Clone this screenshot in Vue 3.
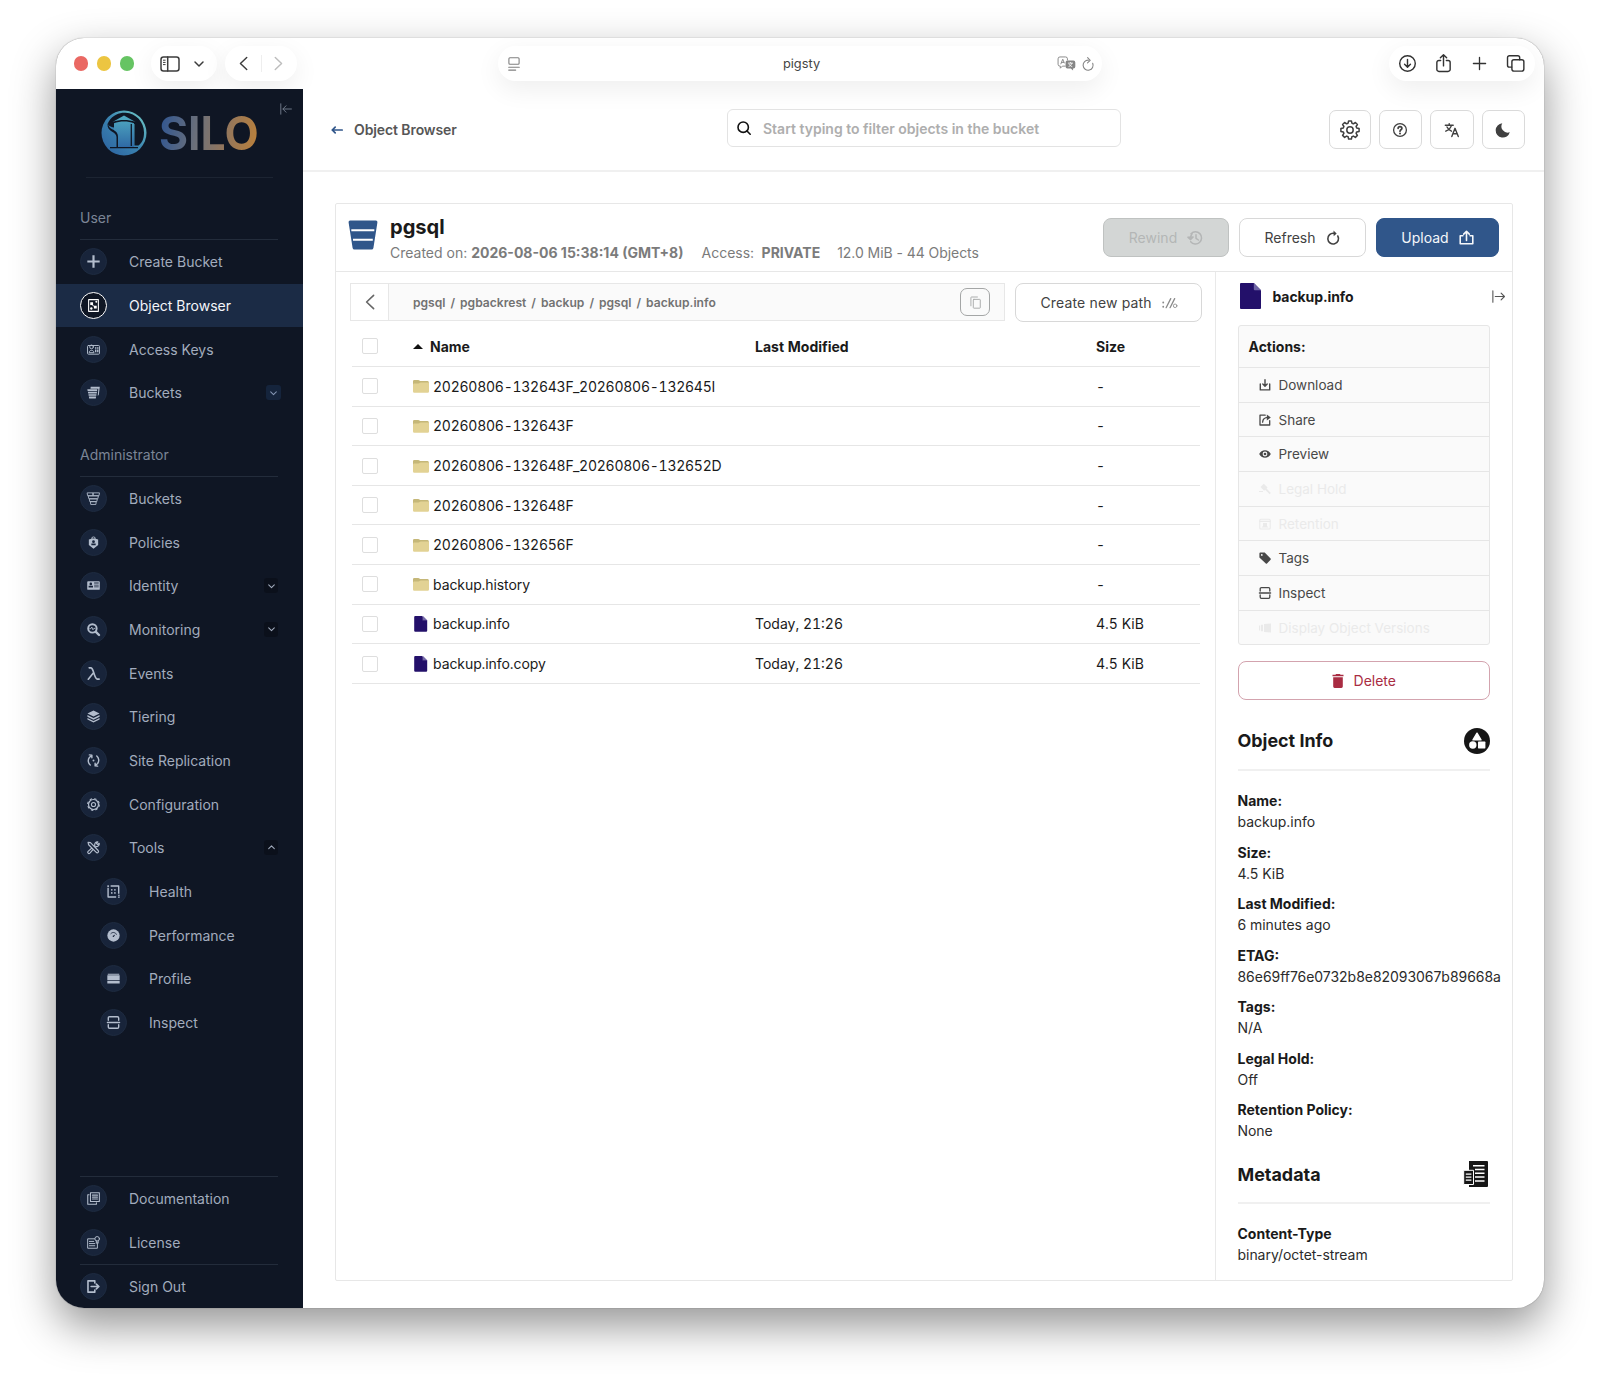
<template>
  <div class="desktop">
    <div class="window">
      <header class="toolbar">
        <div class="lights">
          <span class="light red"></span>
          <span class="light yellow"></span>
          <span class="light green"></span>
        </div>
        <div class="pill pill-side">
          <svg class="ic-sidebar" viewBox="0 0 20 16" v-html="icons.sidebar"></svg>
          <svg class="ic-chev" viewBox="0 0 10 6" v-html="icons.chevDown"></svg>
        </div>
        <div class="pill pill-nav">
          <svg class="ic-nav" viewBox="0 0 10 16" v-html="icons.left"></svg>
          <span class="nav-sep"></span>
          <svg class="ic-nav muted" viewBox="0 0 10 16" v-html="icons.right"></svg>
        </div>
        <div class="pill pill-url">
          <svg class="ic-reader" viewBox="0 0 12 14" v-html="icons.reader"></svg>
          <span class="url">pigsty</span>
          <span class="url-tools">
            <svg class="ic-translate" viewBox="0 0 20 16" v-html="icons.translate"></svg>
            <svg class="ic-reload" viewBox="0 0 12 16" v-html="icons.reload"></svg>
          </span>
        </div>
        <div class="pill pill-actions">
          <svg viewBox="0 0 20 20" v-html="icons.downloads"></svg>
          <svg viewBox="0 0 20 20" v-html="icons.share"></svg>
          <svg viewBox="0 0 20 20" v-html="icons.newTab"></svg>
          <svg viewBox="0 0 20 20" v-html="icons.tabs"></svg>
        </div>
      </header>

      <div class="app">
        <aside class="sidebar">
          <div class="brand">
            <svg class="brand-mark" viewBox="0 0 46 46" v-html="icons.logo"></svg>
            <span class="brand-name">SILO</span>
            <svg class="collapse" viewBox="0 0 12 12" v-html="icons.collapse"></svg>
          </div>

          <template v-for="section in menu" :key="section.title">
            <div class="section-title"><span>{{ section.title }}</span></div>
            <a
              v-for="item in section.items"
              :key="item.label"
              class="item"
              :class="{ active: item.active, child: item.child }"
            >
              <span class="bubble"><svg viewBox="0 0 12 12" v-html="icons[item.icon]"></svg></span>
              <span class="label">{{ item.label }}</span>
              <span v-if="item.toggle" class="toggle" :class="{ tinted: item.tinted }">
                <svg viewBox="0 0 10 6" v-html="icons[item.toggle]"></svg>
              </span>
            </a>
          </template>

          <div class="bottom">
            <a v-for="item in footer" :key="item.label" class="item" :class="{ ruled: item.ruled }">
              <span class="bubble"><svg viewBox="0 0 12 12" v-html="icons[item.icon]"></svg></span>
              <span class="label">{{ item.label }}</span>
            </a>
          </div>
        </aside>

        <main class="main">
          <div class="topbar">
            <div class="crumb">
              <svg viewBox="0 0 12 8" v-html="icons.back"></svg>
              <span>Object Browser</span>
            </div>
            <div class="search">
              <svg viewBox="0 0 14 14" v-html="icons.search"></svg>
              <span>Start typing to filter objects in the bucket</span>
            </div>
            <div class="tools">
              <button v-for="t in tools" :key="t" class="tool" :class="t">
                <svg viewBox="0 0 20 20" v-html="icons[t]"></svg>
              </button>
            </div>
          </div>

          <section class="panel">
            <div class="bucket">
              <svg class="bucket-icon" viewBox="0 0 30 30" v-html="icons.bucket"></svg>
              <div class="bucket-text">
                <h1>pgsql</h1>
                <p>
                  <span>Created on: <b>2026-08-06 15:38:14 (GMT+8)</b></span>
                  <span class="access">Access: <b>PRIVATE</b></span>
                  <span class="usage">12.0 MiB - 44 Objects</span>
                </p>
              </div>
              <div class="bucket-actions">
                <button class="btn disabled">Rewind <svg viewBox="0 0 16 16" v-html="icons.rewind"></svg></button>
                <button class="btn">Refresh <svg viewBox="0 0 16 16" v-html="icons.refresh"></svg></button>
                <button class="btn primary">Upload <svg viewBox="0 0 16 16" v-html="icons.upload"></svg></button>
              </div>
            </div>

            <div class="body">
              <div class="listing">
                <div class="path-row">
                  <div class="path">
                    <button class="path-back"><svg viewBox="0 0 10 16" v-html="icons.left"></svg></button>
                    <span class="path-text">
                      <template v-for="(part, i) in path" :key="i">
                        <i v-if="i">/</i><span>{{ part }}</span>
                      </template>
                    </span>
                    <button class="copy"><svg viewBox="0 0 12 14" v-html="icons.copy"></svg></button>
                  </div>
                  <button class="btn new-path">Create new path <svg viewBox="0 0 16 12" v-html="icons.newPath"></svg></button>
                </div>

                <div class="row head">
                  <span class="check"></span>
                  <span class="name"><i class="sort"></i>Name</span>
                  <span class="modified">Last Modified</span>
                  <span class="size">Size</span>
                </div>
                <div v-for="f in files" :key="f.name" class="row">
                  <span class="check"></span>
                  <span class="name" :class="{ dated: /^\d/.test(f.name) }">
                    <svg viewBox="0 0 16 16" v-html="icons[f.type]"></svg>{{ f.name }}
                  </span>
                  <span class="modified">{{ f.modified }}</span>
                  <span class="size">{{ f.size }}</span>
                </div>
              </div>

              <aside class="details">
                <div class="details-head">
                  <svg class="file-big" viewBox="0 0 21 26" v-html="icons.fileBig"></svg>
                  <b>backup.info</b>
                  <svg class="expand" viewBox="0 0 12 12" v-html="icons.expand"></svg>
                </div>

                <div class="actions">
                  <div class="actions-title">Actions:</div>
                  <div v-for="a in actions" :key="a.label" class="action" :class="{ off: a.off }">
                    <svg viewBox="0 0 12 12" v-html="icons[a.icon]"></svg>{{ a.label }}
                  </div>
                </div>

                <button class="btn delete"><svg viewBox="0 0 12 14" v-html="icons.trash"></svg> Delete</button>

                <div class="heading">
                  <h2>Object Info</h2>
                  <svg viewBox="0 0 26 26" v-html="icons.objectInfo"></svg>
                </div>
                <dl>
                  <div v-for="i in info" :key="i.label">
                    <dt>{{ i.label }}</dt>
                    <dd>{{ i.value }}</dd>
                  </div>
                </dl>

                <div class="heading meta">
                  <h2>Metadata</h2>
                  <svg viewBox="0 0 26 26" v-html="icons.metadata"></svg>
                </div>
                <dl>
                  <div>
                    <dt>Content-Type</dt>
                    <dd>binary/octet-stream</dd>
                  </div>
                </dl>
              </aside>
            </div>
          </section>
        </main>
      </div>
    </div>
  </div>
</template>

<script setup>
const menu = [
  {
    title: 'User',
    items: [
      { label: 'Create Bucket', icon: 'plus' },
      { label: 'Object Browser', icon: 'browser', active: true },
      { label: 'Access Keys', icon: 'keys' },
      { label: 'Buckets', icon: 'bucketsSolid', toggle: 'chevDown', tinted: true },
    ],
  },
  {
    title: 'Administrator',
    items: [
      { label: 'Buckets', icon: 'bucketsLine' },
      { label: 'Policies', icon: 'policies' },
      { label: 'Identity', icon: 'identity', toggle: 'chevDown' },
      { label: 'Monitoring', icon: 'monitoring', toggle: 'chevDown' },
      { label: 'Events', icon: 'lambda' },
      { label: 'Tiering', icon: 'tiering' },
      { label: 'Site Replication', icon: 'replication' },
      { label: 'Configuration', icon: 'config' },
      { label: 'Tools', icon: 'wrench', toggle: 'chevUp' },
      { label: 'Health', icon: 'health', child: true },
      { label: 'Performance', icon: 'performance', child: true },
      { label: 'Profile', icon: 'profile', child: true },
      { label: 'Inspect', icon: 'inspect', child: true },
    ],
  },
];

const footer = [
  { label: 'Documentation', icon: 'docs', ruled: true },
  { label: 'License', icon: 'license' },
  { label: 'Sign Out', icon: 'signOut', ruled: true },
];

const tools = ['gear', 'help', 'language', 'moon'];

const path = ['pgsql', 'pgbackrest', 'backup', 'pgsql', 'backup.info'];

const files = [
  { name: '20260806-132643F_20260806-132645I', type: 'folder', modified: '', size: '-' },
  { name: '20260806-132643F', type: 'folder', modified: '', size: '-' },
  { name: '20260806-132648F_20260806-132652D', type: 'folder', modified: '', size: '-' },
  { name: '20260806-132648F', type: 'folder', modified: '', size: '-' },
  { name: '20260806-132656F', type: 'folder', modified: '', size: '-' },
  { name: 'backup.history', type: 'folder', modified: '', size: '-' },
  { name: 'backup.info', type: 'file', modified: 'Today, 21:26', size: '4.5 KiB' },
  { name: 'backup.info.copy', type: 'file', modified: 'Today, 21:26', size: '4.5 KiB' },
];

const actions = [
  { label: 'Download', icon: 'download' },
  { label: 'Share', icon: 'shareBox' },
  { label: 'Preview', icon: 'eye' },
  { label: 'Legal Hold', icon: 'gavel', off: true },
  { label: 'Retention', icon: 'retention', off: true },
  { label: 'Tags', icon: 'tag' },
  { label: 'Inspect', icon: 'inspect' },
  { label: 'Display Object Versions', icon: 'versions', off: true },
];

const info = [
  { label: 'Name:', value: 'backup.info' },
  { label: 'Size:', value: '4.5 KiB' },
  { label: 'Last Modified:', value: '6 minutes ago' },
  { label: 'ETAG:', value: '86e69ff76e0732b8e82093067b89668a' },
  { label: 'Tags:', value: 'N/A' },
  { label: 'Legal Hold:', value: 'Off' },
  { label: 'Retention Policy:', value: 'None' },
];

// wraps markup in a stroked group that inherits the text colour
const line = (w, inner) =>
  `<g fill="none" stroke="currentColor" stroke-width="${w}" stroke-linecap="round" stroke-linejoin="round">${inner}</g>`;
const solid = (inner) => `<g fill="currentColor">${inner}</g>`;

const icons = {
  // browser chrome
  sidebar: line(1.5, '<rect x="1" y="1" width="18" height="14" rx="2.5"/><path d="M7.7 1v14"/><path d="M3.4 4.2h1.8M3.4 6.4h1.8M3.4 8.6h1.8" stroke-width="1"/>'),
  chevDown: line(1.5, '<path d="M1 1l4 4 4-4"/>'),
  chevUp: line(1.5, '<path d="M1 5l4-4 4 4"/>'),
  left: line(1.6, '<path d="M8.6 1.4L1.6 8l7 6.6"/>'),
  right: line(1.6, '<path d="M1.4 1.4l7 6.6-7 6.6"/>'),
  reader: line(1.1, '<rect x=".9" y=".8" width="10.2" height="6.4" rx="1"/><path d="M.7 10.2h10.6M.7 13.1h7"/>'),
  translate: line(1, '<path d="M8.5 10.8H5.6L3.4 13v-2.2H3a2 2 0 0 1-2-2V3a2 2 0 0 1 2-2h6a2 2 0 0 1 2 2v1.2"/><path d="M4 8.4l2-5 1.6 4M4.7 6.8h2.4"/>')
    + '<path fill="currentColor" d="M11 4.8h6.4a2 2 0 0 1 2 2v4.4a2 2 0 0 1-2 2h-.4v2.3l-2.4-2.3H11a2 2 0 0 1-2-2V6.8a2 2 0 0 1 2-2z"/><path d="M11.5 7.6h5.4M14.2 6.5v1.1M12.2 11.3c2-.8 3-2 3.5-3.7M12.7 8.6c.7 1.3 1.7 2.2 3.4 2.7" fill="none" stroke="#fff" stroke-width=".9"/>',
  reload: line(1.1, '<path d="M10.7 7.2A5 5 0 1 1 6.6 4.2"/><path d="M5.6 1.6l2.6 2.8-2.7 2.4"/>'),
  downloads: line(1.5, '<circle cx="10" cy="10" r="8.2"/><path d="M10 5.8v8M6.9 10.9l3.1 3.1 3.1-3.1"/>'),
  share: line(1.5, '<path d="M7 6.8H5.2A2.2 2.2 0 0 0 3 9v7.2a2.2 2.2 0 0 0 2.2 2.2h9.6a2.2 2.2 0 0 0 2.2-2.2V9a2.2 2.2 0 0 0-2.2-2.2H13"/><path d="M10 12.5V1M6.7 4L10 .8 13.3 4"/>'),
  newTab: line(1.4, '<path d="M10 3.6v12.8M3.6 10h12.8"/>'),
  tabs: line(1.5, '<rect x="6.2" y="6" width="12.6" height="12" rx="2.2"/><path d="M6 13.8H3.6a2 2 0 0 1-2-2V3.9a2 2 0 0 1 2-2h8.8a2 2 0 0 1 2 2V6"/>'),

  // sidebar
  logo: `<defs><linearGradient id="mark" x1="0" y1="1" x2="1" y2="0"><stop offset="0" stop-color="#2b5f9e"/><stop offset=".5" stop-color="#3a83b0"/><stop offset="1" stop-color="#74cfc9"/></linearGradient>
    <linearGradient id="tower" x1="0" y1="1" x2="0" y2="0"><stop offset="0" stop-color="#2f6aa5"/><stop offset="1" stop-color="#4a9fbd"/></linearGradient></defs>
    <circle cx="23" cy="23" r="22.5" fill="url(#mark)"/>
    <path d="M7.5 12C12 4.5 19 2.5 24.5 2.8 35 3.3 43 12 43 22.5c0 6.5-2 10.500-5.500 13H33.500V14H13v3.500c-4-.6-7.200-2.200-5.500-5.500z" fill="#0f1624"/>
    <path d="M7.5 12c-1 6 3 6.500 6 8.500 2.500 1.700 3.500 3.500 3.500 6.500v10h-1.500V27c0-5.500-9.500-5-9-13z" fill="#0f1624"/>
    <path d="M23 5.500L11.500 12c3.500-1.300 7.500-1.900 11.500-1.900s8 .6 11.500 1.900z" fill="#4ea6c0"/>
    <path d="M13 13.300c6-2.300 14-2.300 20 0V37H17.500V27c0-4-2-5.500-4.500-7z" fill="url(#tower)"/>
    <path d="M9 37.600h28M30.300 14v22" stroke="#0f1624" stroke-width="1.300" fill="none"/>`,
  collapse: line(1, '<path d="M.8.8v10.4M11.4 6H3M6 2.8L2.9 6 6 9.2"/>'),
  expand: line(1, '<path d="M.8.8v10.4M3 6h8.4M8.4 2.8L11.5 6 8.4 9.2"/>'),
  plus: solid('<path d="M5 .3h2V5h4.7v2H7v4.7H5V7H.3V5H5z"/>'),
  browser: line(1, '<path d="M1.5.6h9v10.8h-9z"/>') + solid('<rect x="3" y="3" width="2.6" height="2.6"/><rect x="6.4" y="6.2" width="2.6" height="2.6"/><circle cx="4" cy="8.8" r="1.1"/><circle cx="8.6" cy="2.6" r=".9"/><path d="M5 5l2 1.6-.5.5-2-1.6z"/>'),
  keys: line(.9, '<rect x=".5" y="2.3" width="11" height="8" rx=".8"/><circle cx="4.2" cy="3.6" r="1.7"/><path d="M2 8.6c0-2.6 4.4-2.6 4.4 0z"/>') + solid('<path d="M7.4 4h1.3v1.3H7.4zM9.3 4h1.3v1.3H9.3zM7.4 6h1.3v2.6H7.4zM9.3 6h1.3v2.6H9.3z"/>'),
  bucketsSolid: solid('<path d="M3.4.6h8.4l-.9 7.8-1 .6.6-6.4H3.2zM.3 3h9.2l-.2 1.7H.6zM.8 5.4h8.4L9 7H1.1zM1.3 7.7h7.5l-.2 1.4H1.5zM1.7 9.8h6.7l-.3 1.8H2z"/>'),
  bucketsLine: line(.8, '<path d="M.5.8h5v2.6H.9zM6 .8h5.5l-.4 2.6H6zM1.5 3.6h9l-.5 2.6H2zM2.5 6.4h7l-.4 2.4H2.9zM3.5 9h5l-.3 2.5H3.8z"/>'),
  policies: '<path fill="currentColor" fill-rule="evenodd" d="M4 2.5a2 2 0 0 1 4 0l2.3.7v5L6 11.8 1.7 8.2v-5zM4.9 2.3h2.2a1.1 1.1 0 0 0-2.2 0zM6 3.9a1.3 1.3 0 1 0 0 2.6 1.3 1.3 0 0 0 0-2.6zM4 7v1.5h4V7z"/>',
  identity: '<path fill="currentColor" fill-rule="evenodd" d="M1 2h10q.8 0 .8.8v6.4q0 .8-.8.8H1q-.8 0-.8-.8V2.8Q.2 2 1 2zm2.5 1.3a1.2 1.2 0 1 0 0 2.4 1.2 1.2 0 0 0 0-2.4zM1.5 6.3v1.5h4V6.3zM6.6 3.2v1h4.2v-1zM6.6 5.2v.7h4.2v-.7zM6.6 7v.7h4.2V7z"/>',
  monitoring: line(1.8, '<circle cx="5" cy="5" r="3.9"/><path d="M8.2 8.2l2.9 2.9" stroke-width="2.2"/>') + line(.8, '<path d="M2.6 5.2h1l.8-1.5 1.1 2.6.8-1.3h1"/>'),
  lambda: line(1.5, '<path d="M2 .8h1.6C5 .8 5.4 3 6.2 5.2 7.2 8 8 11 9.5 11.2h1.7M6 5.2L1.2 11.3"/>'),
  tiering: solid('<path d="M6 .5l5.6 2.7L6 6 .4 3.2z"/><path d="M.4 4.6L6 7.3l5.6-2.7v1.6L6 8.9.4 6.2z"/><path d="M.4 7.4L6 10.1l5.6-2.7v1.4L6 11.6.4 8.8z"/>'),
  replication: line(1.3, '<path d="M4.5 1.2L2.2 3.2a5 5 0 0 0 .8 6.9M2.2.8l2.3.2v2.4M7.5 10.8l2.3-2a5 5 0 0 0-.8-6.9M9.8 11.2l-2.3-.2V8.6"/>') + solid('<circle cx="6" cy="6" r=".9"/>'),
  config: line(1, '<circle cx="6" cy="6" r="1.9"/>') + '<circle cx="6" cy="6" r="4.6" fill="none" stroke="currentColor" stroke-width="1.1"/><circle cx="6" cy="6" r="5.4" fill="none" stroke="currentColor" stroke-width="1" stroke-dasharray="2.2 2.04"/>',
  wrench: line(1.1, '<path d="M1 1.2l2.2.3 6.9 7c1.5 1.5-.3 3.3-1.8 1.8L1.5 3.5zM7.2 4.3c-.5-2 .8-3.7 2.8-3.5L8.8 2.3l1 1 1.5-1.2c.3 2-1.3 3.4-3.3 3M4.3 6.7L1 9.6c-1 1.2.5 2.6 1.7 1.6L5.5 8"/>'),
  health: line(1.3, '<path d="M4 .9h6.8v6.6M1 3.3v7.8h6.8" stroke-linecap="square"/>') + solid('<rect x=".3" y=".3" width="1.5" height="1.5"/><rect x="10.2" y="9" width="1.5" height="1"/><rect x="10.2" y="10.6" width="1.5" height="1.2"/><circle cx="4.4" cy="4.4" r=".8"/><circle cx="7.3" cy="4.4" r=".8"/><circle cx="4.4" cy="7.3" r=".8"/><circle cx="7.3" cy="7.3" r=".8"/>'),
  performance: solid('<circle cx="6" cy="6" r="5.7"/>') + '<path d="M3.3 4.5a3.2 3.2 0 0 1 5.6.8" fill="none" stroke="#18243a" stroke-width=".7"/><path d="M5.4 6.2l2.3-1.2-1.3 2.2a.7.7 0 0 1-1-1z" fill="#18243a"/>',
  profile: solid('<path d="M.7 1.5h10.6v1H.7zM.3 3h11.4v4.6H.3zM.3 8.4h11.4v2.2H.3z"/>'),
  inspect: line(1.3, '<path d="M1.2 4V1.9Q1.2.7 2.4.7h7.2q1.2 0 1.2 1.2V4M.4 6h11.2M1.2 8v2.1q0 1.2 1.2 1.2h7.2q1.2 0 1.2-1.2V8"/>'),
  docs: line(1, '<path d="M3.2.7h8.2v8H3.2z"/><path d="M1.9 2.6H.7v8.7h8V10M5 2.9h4.7M5 4.7h4.7M5 6.5h4.7"/>'),
  license: line(.9, '<path d="M7 2.6H.6v8.7h9V6.5M2.2 5h4M2.2 7h5M2.2 9h5"/><circle cx="9.4" cy="2.6" r="2.1"/><path d="M8.6 4.5v2.2l.9-.6.8.6V4.5"/>'),
  signOut: line(1.5, '<path d="M7.2 2.8V.8H.9v10.4h6.3v-2M3.8 6h6M8.6 3.8L11 6 8.6 8.2"/>'),

  // top bar
  back: line(1.7, '<path d="M11.2 4H1.3M4.2 1.1L1.2 4l3 2.9"/>'),
  search: line(1.6, '<circle cx="6.2" cy="6.2" r="5.2"/><path d="M10 10l3.2 3.2"/>'),
  gear: line(1.5, '<circle cx="10" cy="10" r="3.2"/><path d="M8.6.9h2.8l.5 2.3 1.5.6 2-1.3 2 2-1.3 2 .6 1.5 2.4.6v2.8l-2.4.5-.6 1.5 1.3 2-2 2-2-1.3-1.5.6-.5 2.4H8.6l-.5-2.4-1.5-.6-2 1.3-2-2 1.3-2-.6-1.5-2.4-.5V8.6L3.3 8l.6-1.5-1.3-2 2-2 2 1.3 1.5-.6z"/>'),
  help: line(1.3, '<circle cx="10" cy="10" r="6.4"/>') + line(1.7, '<path d="M8.1 8.4c.1-2.5 3.8-2.4 3.8 0 0 1.4-1.9 1.3-1.9 2.8"/>') + solid('<circle cx="10" cy="13.6" r="1"/>'),
  language: line(1.4, '<path d="M3.3 5.2h7.9M7.2 3.6v1.6M9.5 5.2c-.6 2.5-2.6 4.700-5.700 6M5 7c1 2 2.500 3.300 4.500 4.200"/><path d="M9.800 16.600l3.200-8.300 3.300 8.300M10.900 13.800h4.200"/>'),
  moon: solid('<path d="M9.3 3.2A7.2 7.2 0 1 0 16.8 12.3A6.3 6.3 0 0 1 9.3 3.2z"/>'),

  // bucket header and list
  bucket: '<path fill="#30568a" d="M2.2.5h25.6q1.9 0 1.6 1.9l-4 25.6q-.3 1.5-1.8 1.5H6.4q-1.5 0-1.8-1.5L.6 2.4Q.3.5 2.2.5z"/><path d="M3.3 10.3h23M5 19.8h19.8" stroke="#fff" stroke-width="2.1"/>',
  rewind: line(1.5, '<path d="M4 3.7a6.1 6.1 0 1 1-.3 8"/><path d="M.9 7.2l2.7 2.4 2.5-2.6z" fill="currentColor"/><path d="M3.6 8.5c0-2 .4-3.4 1.4-4.8M9 4.8V8.3l2.4 1.7"/>'),
  refresh: line(1.7, '<path d="M12.6 6.4A5.7 5.7 0 1 1 8.6 3.6"/><path d="M8 .6l3.4 3-3.2 3z" fill="currentColor" stroke="none"/>'),
  upload: line(1.7, '<path d="M4.2 6.2H1.3v8.4h13.4V6.2h-2.9M8 11.2V2M5 4.4l3-3 3 3"/>'),
  copy: line(1, '<rect x="3.6" y="3.6" width="7.6" height="9.6" rx=".6"/><path d="M1 10.6V1.6Q1 1 1.6 1h6.5"/>'),
  newPath: solid('<circle cx="1.3" cy="5.5" r="1"/><circle cx="1.3" cy="10" r="1"/>') + line(1.4, '<path d="M4.4 11L9.3 1.3M8.6 11L13.5 1.3"/>') + line(.9, '<circle cx="14" cy="9" r="1.9"/>'),
  folder: '<path fill="#c5b778" d="M0 3.2Q0 1.9 1.3 1.9h3.9q.9 0 1.4.7l.3.4h7.6q1.1 0 1.3 1.3v3H0z"/><path fill="#e2d294" d="M0 6.7q0-1.2 1.2-1.2h4.3q.7 0 1.1-.4l.3-.3q.5-.4 1.2-.4h6.6q1.3 0 1.3 1.3v7.7q0 1.3-1.3 1.3H1.3Q0 14.7 0 13.4z"/>',
  file: '<path fill="#23106a" d="M2.3 0h6.9v4.3h5v10.4q0 1.1-1.1 1.1H2.3q-1.1 0-1.1-1.1V1.1Q1.2 0 2.3 0z"/><path fill="#23106a" d="M9.2 0l5 4.8H9.2z"/><path fill="#7469a8" d="M10 0l4.2 4.3H10z"/>',
  fileBig: '<path fill="#23106a" d="M1 0h12.8L21 7.2V25q0 1-1 1H1q-1 0-1-1V1q0-1 1-1z"/><path fill="#6f66a6" d="M13.8 0L21 7.2h-6.2q-1 0-1-1z"/>',

  // object actions
  download: line(1.4, '<path d="M1.3 5v5.9h9.4V5M6 .8v6M3.8 5L6 7.2 8.2 5"/>'),
  shareBox: line(1.3, '<path d="M6.2 1.2H1v9.8h9.7V6.6M3.6 8.2c.2-3 2-4.7 5.4-4.8"/>') + solid('<path d="M7.8.6l4 2.9-4 2.9z"/>'),
  eye: '<path fill="currentColor" fill-rule="evenodd" d="M6 2.3c2.6 0 4.7 1.5 5.8 3.7C10.7 8.2 8.6 9.7 6 9.7S1.3 8.2.2 6C1.3 3.8 3.4 2.3 6 2.3zm0 1.3a2.4 2.4 0 1 0 0 4.8 2.4 2.4 0 0 0 0-4.8z"/><circle cx="6" cy="6" r="1.3" fill="currentColor"/>',
  gavel: solid('<path d="M4.8.8l3.8 3.6-1 1 4.2 4.6-1.2 1.2L6.2 6.7l-1.1 1L1.5 4zM0 8h4v1H0z"/>'),
  retention: line(1.1, '<rect x=".8" y="1.2" width="10.4" height="9.8" rx="1"/><path d="M.8 3.4h10.4"/>') + solid('<path d="M4 5h4v3l1.5 1.5h-7L4 8z"/>'),
  tag: '<path fill="currentColor" fill-rule="evenodd" d="M.4 1.6Q.4.6 1.4.6h4.3l5.9 6q.5.6 0 1.2L8 11.4q-.6.5-1.2 0L.4 5.4zM2.8 2a.9.9 0 1 0 0 1.8.9.9 0 0 0 0-1.8z"/>',
  versions: solid('<path d="M0 3.5h1.2v5H0zM2 2.8h2v6.4H2zM5 2l7-.5v9L5 10z"/>'),
  trash: solid('<path d="M4 0h4l.5.8h3v1.5H.5V.8h3zM1.2 3.2h9.6v9.4q0 1.4-1.4 1.4H2.6q-1.4 0-1.4-1.4z"/>'),
  objectInfo: '<circle cx="13" cy="13" r="13" fill="#161616"/><path d="M13 5.2l4 6.700H9z" fill="#fff" stroke="#fff" stroke-width="1.400" stroke-linejoin="round"/><circle cx="8.8" cy="17" r="3.7" fill="#fff"/><rect x="14" y="13.600" width="7.400" height="6.800" rx=".6" fill="#fff"/>',
  metadata: '<path fill="#161616" d="M5 0h18q1 0 1 1v24q0 1-1 1H5z"/><path d="M9 4.7h11.5M11 8.5h9.5M11 12.3h9.5M11 16.1h9.5M11 19.9h9.5" stroke="#fff" stroke-width="1.5"/><path fill="#161616" stroke="#fff" stroke-width="1" d="M-.3 9.3h9.8v14.2H-.3z"/><path d="M1.8 13.2h5.6M1.8 16.2h5.6M1.8 19.2h5.6" stroke="#fff" stroke-width="1.3"/>',
};
</script>

<style>
body {
  margin: 0;
  background: #fff;
}
</style>

<style scoped>
* {
  box-sizing: border-box;
}
svg {
  display: block;
  flex: none;
  overflow: visible;
}
button {
  font: inherit;
  letter-spacing: inherit;
  margin: 0;
  padding: 0;
  background: none;
  border: 0;
}
.desktop {
  height: 1382px;
  padding: 38px 56px 74px;
  background: #fff;
  font-family: Inter, sans-serif;
  font-size: 14px;
  color: #1a1a1a;
  overflow: hidden;
}
.window {
  display: flex;
  flex-direction: column;
  height: 1270px;
  border-radius: 28px;
  overflow: hidden;
  background: #fff;
  box-shadow: 0 0 1px rgba(0, 0, 0, 0.55), 0 18px 44px rgba(0, 0, 0, 0.42);
}

/* browser toolbar */
.toolbar {
  display: flex;
  align-items: center;
  height: 51px;
  padding: 0 9px 0 17.5px;
  flex: none;
  color: #3c3c3c;
}
.lights {
  display: flex;
  gap: 8.5px;
}
.light {
  width: 14.5px;
  height: 14.5px;
  border-radius: 50%;
}
.red { background: #ea6863; }
.yellow { background: #ecc541; }
.green { background: #66c463; }
.pill {
  display: flex;
  align-items: center;
  height: 35px;
  border-radius: 18px;
  background: #fff;
  box-shadow: 0 8px 26px rgba(0, 0, 0, 0.07);
}
.pill-side {
  width: 66px;
  margin-left: 17px;
  padding-left: 9px;
  gap: 14px;
}
.ic-sidebar { width: 20px; height: 16px; }
.ic-chev { width: 10px; height: 6px; }
.pill-nav {
  width: 72px;
  margin-left: 8px;
  padding: 0 14px;
  justify-content: space-between;
}
.ic-nav { width: 9px; height: 15px; }
.muted { color: #bdbdbd; }
.nav-sep {
  width: 1px;
  height: 17px;
  background: #eee;
}
.pill-url {
  width: 604px;
  margin-left: 201px;
  padding: 0 8px 0 10px;
  justify-content: space-between;
  font-size: 12.8px;
}
.ic-reader { width: 12px; height: 14px; color: #808080; }
.url { color: #444; padding-left: 26px; }
.url-tools {
  display: flex;
  align-items: center;
  gap: 6px;
  color: #858585;
}
.ic-translate { width: 19px; height: 15px; }
.ic-reload { width: 12px; height: 16px; }
.pill-actions {
  width: 146px;
  margin-left: auto;
  padding: 0 10px 0 9px;
  justify-content: space-between;
  color: #333;
}
.pill-actions svg { width: 19px; height: 19px; }

.app {
  display: flex;
  flex: 1;
  min-height: 0;
}

/* sidebar */
.sidebar {
  display: flex;
  flex-direction: column;
  width: 247px;
  flex: none;
  background: #0f1624;
  color: #a2acbd;
}
.brand {
  position: relative;
  display: flex;
  align-items: center;
  height: 89px;
  margin: 0 30px;
  padding-left: 15px;
  padding-bottom: 1px;
  border-bottom: 1px solid #1c2432;
  flex: none;
}
.brand-mark { width: 46px; height: 46px; }
.brand-name {
  margin-left: 12px;
  width: 107px;
  font-size: 47px;
  font-weight: 700;
  line-height: 46px;
  color: transparent;
  background: linear-gradient(100deg, #35588f 5%, #6f7178 40%, #8e7560 62%, #b9803c 95%);
  background-clip: text;
  -webkit-background-clip: text;
  transform: scaleX(.945);
  transform-origin: 0 50%;
}
.collapse {
  position: absolute;
  top: 14px;
  right: -19px;
  width: 12px;
  height: 12px;
  color: #6d7686;
}
.section-title {
  display: flex;
  align-items: flex-end;
  height: 62px;
  margin: 0 25px 0 24px;
  padding-bottom: 12px;
  border-bottom: 1px solid #232c3b;
  line-height: 18px;
  color: #7b8596;
  flex: none;
}
.item {
  display: flex;
  align-items: center;
  height: 43.67px;
  padding: 0 22px 0 24px;
  flex: none;
}
.item.child { padding-left: 44px; }
.item.active {
  background: #1b2b45;
  color: #f4f6fa;
}
.bubble {
  display: flex;
  align-items: center;
  justify-content: center;
  width: 27px;
  height: 27px;
  border: 1px solid #1e2b40;
  border-radius: 50%;
  background: #18243a;
  color: #b3bdcd;
}
.active .bubble {
  border-color: #fff;
  background: #0f1624;
  color: #fff;
}
.bubble svg { width: 13px; height: 13px; }
.label { margin-left: 22px; }
.toggle {
  display: flex;
  align-items: center;
  justify-content: center;
  width: 14px;
  height: 15px;
  margin-left: auto;
  margin-right: 3px;
  border-radius: 3px;
  background: #0b101b;
}
.toggle.tinted {
  width: 15px;
  margin-right: 0;
  background: #15243c;
  color: #8495b3;
}
.toggle svg { width: 7px; height: 4.5px; }
.bottom {
  margin-top: auto;
}
.bottom .item {
  margin: 0 25px 0 24px;
  padding: 0;
}
.bottom .ruled {
  height: 44px;
  border-top: 1px solid #232c3b;
}

/* main column */
.main {
  flex: 1;
  min-width: 0;
  display: flex;
  flex-direction: column;
}
.topbar {
  display: flex;
  align-items: center;
  height: 83px;
  padding: 0 19px 0 28px;
  border-bottom: 2px solid #f0f0f0;
  flex: none;
}
.crumb {
  display: flex;
  align-items: center;
  gap: 11px;
  width: 396px;
  font-weight: 600;
  letter-spacing: -.1px;
  color: #565656;
}
.crumb svg { width: 12px; height: 8px; color: #30568a; }
.search {
  display: flex;
  align-items: center;
  width: 394px;
  height: 38px;
  margin-bottom: 3px;
  padding-left: 9px;
  border: 1px solid #e3e3e3;
  border-radius: 6px;
  font-weight: 600;
  color: #aeaeae;
}
.search svg { width: 14px; height: 14px; color: #111; margin-right: 12px; }
.tools {
  display: flex;
  gap: 8px;
  margin-left: auto;
}
.tool {
  display: flex;
  align-items: center;
  justify-content: center;
  width: 43.5px;
  height: 39px;
  border: 1px solid #dadada;
  border-radius: 7px;
  color: #404040;
}
.tool svg { width: 20px; height: 20px; }
.tool.gear { width: 42px; }

.panel {
  display: flex;
  flex-direction: column;
  width: 1178px;
  height: 1078px;
  margin: 31px 0 0 32px;
  border: 1px solid #e7e7e7;
  border-radius: 2px;
}
.bucket {
  display: flex;
  height: 68px;
  padding: 14px 13px 0;
  border-bottom: 1px solid #e7e7e7;
  flex: none;
}
.bucket-icon { width: 30px; height: 30px; margin: 2px 0 0 -1px; }
.bucket-text { margin-left: 12px; }
h1 {
  margin: -1px 0 0;
  font-size: 20.1px;
  line-height: 20px;
  font-weight: 700;
}
.bucket-text p {
  display: flex;
  margin: 7px 0 0;
  line-height: 18px;
  color: #7b7b7b;
}
.bucket-text p span { margin-right: 18px; }
.bucket-text b { font-weight: 700; }
.access b { margin-left: 3.5px; }
.bucket-text .usage { letter-spacing: -.06px; margin-left: -1px; }
.bucket-actions {
  display: flex;
  gap: 10px;
  margin-left: auto;
}
.btn {
  display: flex;
  align-items: center;
  justify-content: center;
  height: 39px;
  gap: 10px;
  width: 127px;
  border: 1px solid #d8d8d8;
  border-radius: 8px;
  color: #424242;
}
.btn svg { width: 15px; height: 15px; }
.btn.disabled {
  width: 126px;
  background: #d3d6d5;
  border-color: #bfc2c1;
  color: #b4b6b6;
}
.btn.disabled svg { width: 16px; height: 16px; }
.btn.primary {
  width: 123px;
  background: #30568a;
  border-color: #30568a;
  color: #f5f7fa;
}

.body {
  display: flex;
  flex: 1;
  min-height: 0;
}
.listing {
  width: 880px;
  padding: 11px 13px 0 14px;
  border-right: 1px solid #e9e9e9;
  flex: none;
}
.path-row {
  display: flex;
  gap: 10px;
}
.path {
  display: flex;
  align-items: center;
  width: 656px;
  height: 38px;
  border: 1px solid #e7e7e7;
  background: #fafafa;
}
.path-back {
  display: flex;
  align-items: center;
  justify-content: center;
  width: 38px;
  height: 36px;
  background: #fff;
  border-right: 1px solid #e7e7e7;
  color: #666;
}
.path-back svg { width: 10px; height: 16px; }
.path-text {
  display: flex;
  gap: 5px;
  margin-left: 24px;
  font-size: 12.1px;
  font-weight: 600;
  color: #727272;
}
.path-text i { font-style: normal; }
.copy {
  display: flex;
  align-items: center;
  justify-content: center;
  width: 30px;
  height: 28px;
  margin-left: auto;
  margin-right: 14px;
  border: 1px solid #a4a6a6;
  border-radius: 7px;
  color: #a4a6a6;
}
.copy svg { width: 11px; height: 13px; }
.new-path { width: 187px; letter-spacing: .15px; }
.new-path svg { width: 15px; height: 12px; color: #8a8a8a; }

.row {
  display: flex;
  align-items: center;
  height: 39.62px;
  margin: 0 2px;
  border-bottom: 1px solid #e6e6e6;
  font-variant-numeric: tabular-nums;
}
.row.head {
  height: 45px;
  padding-top: 4px;
  font-weight: 700;
}
.check {
  width: 16px;
  height: 16px;
  margin-left: 9.5px;
  border: 1.5px solid #dedede;
  border-radius: 2px;
}
.name {
  display: flex;
  align-items: center;
  margin-left: 35.5px;
  width: 342px;
  letter-spacing: -.08px;
}
.name.dated { letter-spacing: -.25px; }
.head .name { letter-spacing: 0; }
.name svg { width: 16px; height: 16px; margin-right: 4px; }
.sort {
  margin-right: 7px;
  border: 5.5px solid transparent;
  border-top: 0;
  border-bottom: 5px solid #111;
}
.modified { width: 341px; }

/* object details */
.details {
  flex: 1;
  min-width: 0;
  padding: 11px 22px 0 21.5px;
}
.details-head {
  display: flex;
  align-items: center;
  height: 26px;
  padding-left: 2px;
}
.details-head b { margin-left: 12px; letter-spacing: -.1px; }
.file-big { width: 21px; height: 26px; }
.expand {
  width: 13px;
  height: 13px;
  margin-left: auto;
  margin-right: -15px;
  color: #555;
}
.actions {
  margin-top: 16px;
  height: 320px;
  border: 1px solid #e6e6e6;
  border-radius: 3px;
  background: #fafafa;
}
.actions-title {
  height: 41px;
  padding-left: 10px;
  line-height: 41px;
  font-weight: 700;
}
.action {
  display: flex;
  align-items: center;
  height: 34.7px;
  padding-left: 20px;
  border-top: 1px solid #e6e6e6;
  font-size: 13.5px;
  color: #484848;
}
.action svg { width: 12px; height: 12px; margin-right: 8px; }
.off { color: #eaeaea; }
.btn.delete {
  width: 100%;
  margin-top: 16px;
  border-color: #d3a3ae;
  color: #a92c42;
}
.btn.delete svg { width: 12px; height: 14px; }
.heading {
  display: flex;
  align-items: center;
  justify-content: space-between;
  height: 71px;
  padding-top: 12px;
  border-bottom: 2px solid #f0f0f0;
}
.heading svg { width: 26px; height: 26px; }
h2 {
  margin: 0;
  font-size: 17.9px;
  font-weight: 700;
}
dl { margin: 19px 0 0; }
dl div { height: 51.5px; }
dt {
  line-height: 21px;
  font-weight: 700;
}
dd {
  margin: 0;
  line-height: 21px;
  color: #2b2b2b;
  letter-spacing: -.04px;
}
.heading.meta { height: 53.5px; padding: 0 0 4px; }
</style>
